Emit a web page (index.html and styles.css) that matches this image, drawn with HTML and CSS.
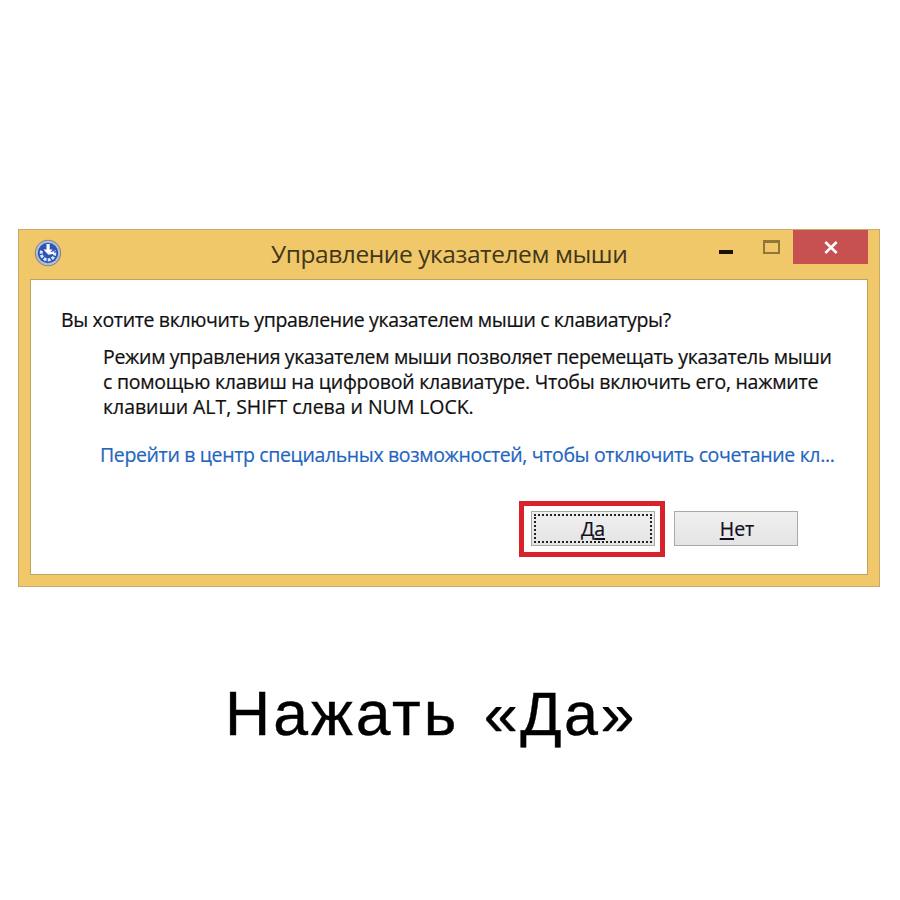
FILE: index.html
```
<!DOCTYPE html>
<html lang="ru">
<head>
<meta charset="utf-8">
<title>Управление указателем мыши</title>
<link rel="stylesheet" href="styles.css">
</head>
<body>
<main class="page">
  <section class="window">
    <header class="titlebar">
      <svg class="app-icon" viewBox="0 0 28 28" aria-hidden="true">
        <circle cx="14" cy="14" r="13.2" fill="#858584"/>
        <circle cx="14" cy="14" r="12.2" fill="#b3bfd6"/>
        <circle cx="14" cy="14" r="10.2" fill="#2c55b5"/>
        <path d="M7.6 11.8A6.8 6.8 0 1 0 20.4 11.8" fill="none" stroke="#d8eaff" stroke-width="3" stroke-dasharray="2.9 1.3"/>
        <path d="M12.5 5h3.2v5.6h3l-4.6 4.8-4.6-4.8h3z" fill="#fff"/>
        <path d="M14 14.6l6-1" stroke="#fff" stroke-width="2.4"/>
      </svg>
      <h1 class="title">Управление указателем мыши</h1>
      <div class="controls">
        <span class="minimize"></span>
        <span class="maximize"></span>
        <span class="close">
          <svg viewBox="0 0 14 13" aria-hidden="true"><path d="M1.3 1l11.4 11M12.7 1L1.3 12" stroke="#fff" stroke-width="2.6"/></svg>
        </span>
      </div>
    </header>
    <div class="client">
      <p class="question">Вы хотите включить управление указателем мыши с клавиатуры?</p>
      <p class="description">
        <span class="line line-a">Режим управления указателем мыши позволяет перемещать указатель мыши</span>
        <span class="line line-b">с помощью клавиш на цифровой клавиатуре. Чтобы включить его, нажмите</span>
        <span class="line line-c">клавиши ALT, SHIFT слева и NUM LOCK.</span>
      </p>
      <a class="link">Перейти в центр специальных возможностей, чтобы отключить сочетание кл...</a>
      <div class="actions">
        <div class="highlight"><button class="button"><span class="focus">Д<u>а</u></span></button></div>
        <button class="button"><span><u>Н</u>ет</span></button>
      </div>
    </div>
  </section>
  <p class="caption">Нажать <span class="quoted">«Да»</span></p>
</main>
</body>
</html>
```
FILE: styles.css
```
* { box-sizing: border-box; }

body {
  margin: 0;
  background: #fff;
  font-family: "Open Sans", "Noto Sans", sans-serif;
  color: #101010;
}

p, h1 { margin: 0; white-space: nowrap; }

.page { height: 900px; padding: 229px 20px 0 18px; overflow: hidden; }

.window {
  width: 862px;
  height: 358px;
  padding: 0 11px 11px;
  border: 1px solid #c5aa6c;
  background: #f0c869;
  display: flex;
  flex-direction: column;
}

.titlebar {
  height: 49px;
  display: grid;
  grid-template-columns: 236px 1fr 156px;
  align-items: start;
}

.app-icon { width: 28px; height: 28px; margin: 9px 0 0 4px; }

.title {
  margin: 8px 0 0 5px;
  font-size: 24.5px;
  line-height: 32px;
  font-weight: 400;
  letter-spacing: -0.43px;
  color: #43371b;
}

.controls { display: flex; justify-content: flex-end; align-items: flex-start; }
.minimize { width: 14px; height: 4px; margin: 20px 30px 0 0; background: #191307; }
.maximize { width: 17px; height: 14px; margin: 10px 13px 0 0; border: 2px solid #907638; border-top-width: 3px; }
.close {
  width: 75px;
  height: 34px;
  padding: 11px 0 0 31px;
  background: #c75050;
}
.close svg { display: block; width: 14px; height: 13px; }

.client {
  flex: 1;
  padding: 27px 0 0 30px;
  border: 1px solid #bda25f;
  background: #fff;
  font-size: 19.5px;
  line-height: 25px;
  -webkit-text-stroke: 0.2px;
}

.question { letter-spacing: -0.35px; }
.description { margin: 12px 0 0 42px; }
.line { display: block; }
.line-a { letter-spacing: -0.32px; }
.line-b { letter-spacing: -0.25px; }
.line-c { letter-spacing: -0.05px; }

.link {
  display: block;
  margin: 23px 0 0 39px;
  letter-spacing: -0.36px;
  color: #1f66bf;
  white-space: nowrap;
}

.actions { display: flex; align-items: flex-start; gap: 10px; margin: 34px 0 0 458px; }
.highlight {
  width: 146px;
  height: 56px;
  padding: 5px 0 0 7px;
  border: 5px solid #d9212b;
}
.button {
  width: 124px;
  height: 35px;
  padding: 2px;
  border: 1px solid #a9a9a9;
  background: linear-gradient(#f0f0f0, #e4e4e4);
  font: inherit;
  font-size: 19.5px;
  line-height: 25px;
  color: #101020;
}
.actions > .button { margin: 10px 0 0 -1px; padding-left: 4px; }
.button span { display: block; height: 29px; line-height: 29px; }
.button .focus { border: 2px dotted #222; line-height: 25px; }
.button u { text-decoration-thickness: 1.5px; text-underline-offset: 2px; text-decoration-skip-ink: none; }

.caption {
  margin: 90px 0 0 207px;
  font-family: "Liberation Sans", sans-serif;
  font-size: 62.5px;
  line-height: 72px;
  letter-spacing: 3px;
  word-spacing: 4px;
  color: #000;
  -webkit-text-stroke: 0.4px;
}
.quoted { font-size: 61px; letter-spacing: 2.6px; }
```
